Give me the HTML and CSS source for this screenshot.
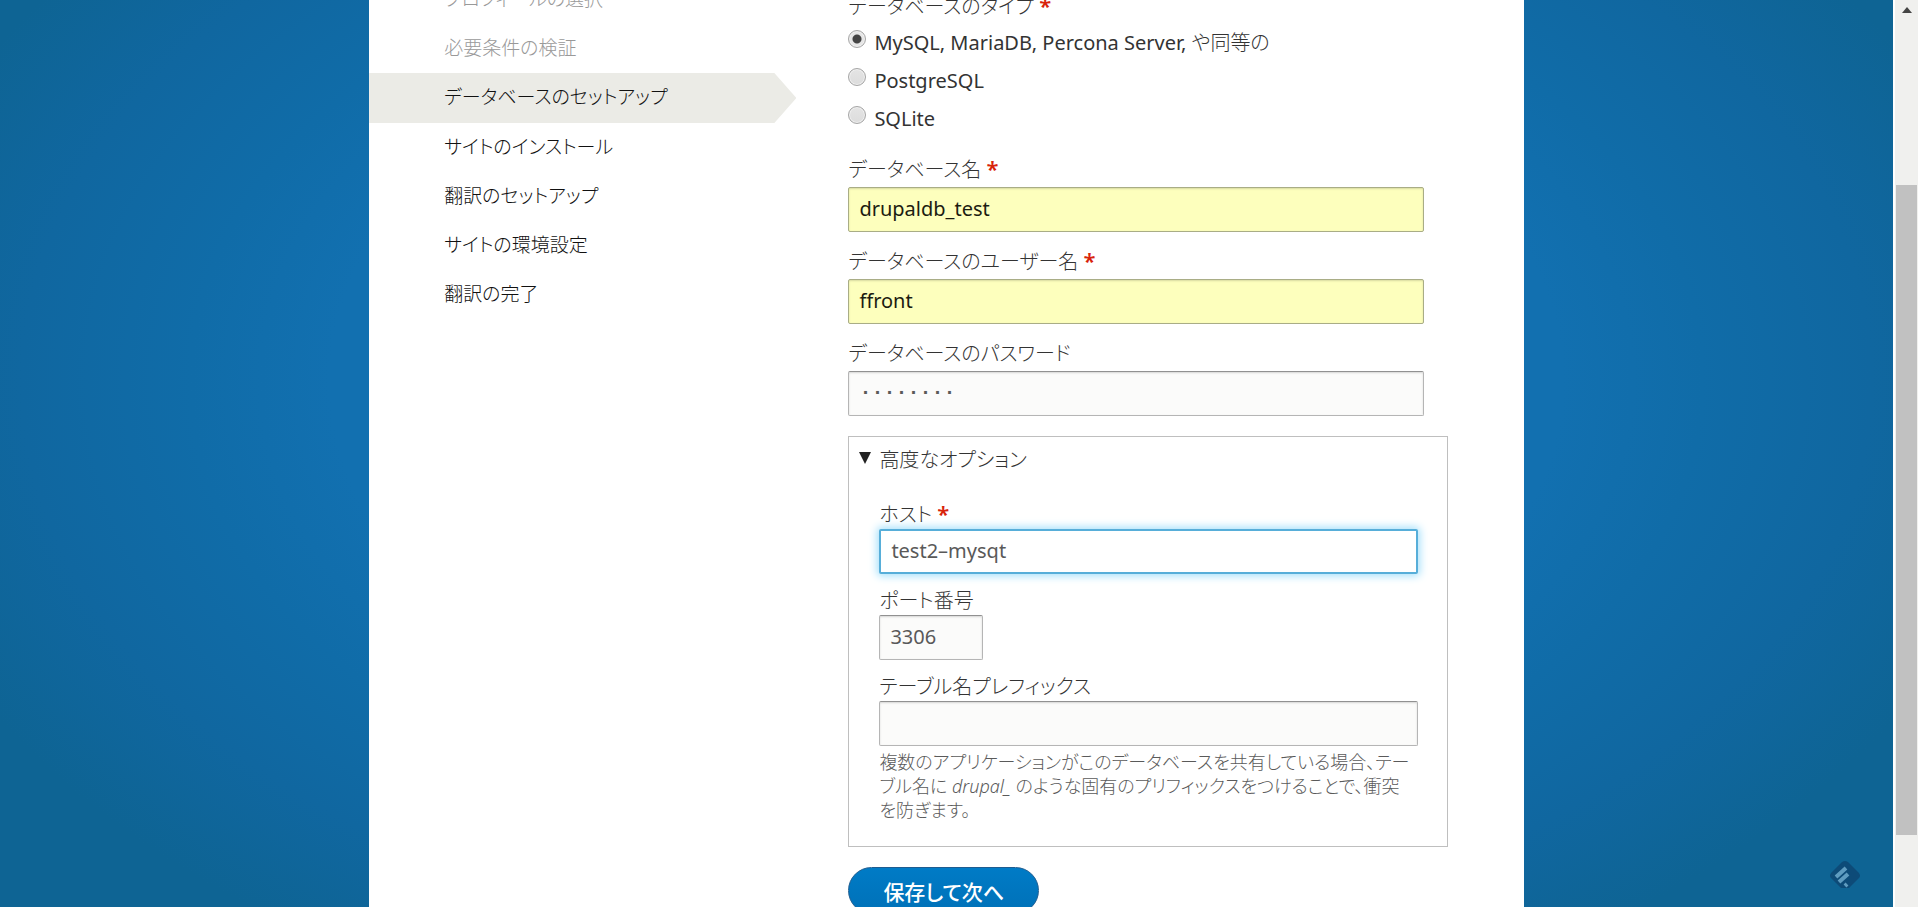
FILE: index.html
```
<!DOCTYPE html>
<html lang="ja">
<head>
<meta charset="utf-8">
<title>データベースのセットアップ</title>
<link rel="stylesheet" href="styles.css">
</head>
<body>
<div class="backdrop">
  <div class="page">
    <nav class="steps" aria-label="インストールの手順">
      <ol class="step-list">
        <li class="step done">プロフィールの選択</li>
        <li class="step done">必要条件の検証</li>
        <li class="step active">データベースのセットアップ</li>
        <li class="step">サイトのインストール</li>
        <li class="step">翻訳のセットアップ</li>
        <li class="step">サイトの環境設定</li>
        <li class="step">翻訳の完了</li>
      </ol>
    </nav>
    <main class="content">
      <form>
        <fieldset class="driver">
          <legend class="label">データベースのタイプ <span class="required">*</span></legend>
          <div class="option"><input type="radio" name="driver" id="mysql" checked><label for="mysql">MySQL, MariaDB, Percona Server, <span class="light">や同等の</span></label></div>
          <div class="option"><input type="radio" name="driver" id="pgsql"><label for="pgsql">PostgreSQL</label></div>
          <div class="option"><input type="radio" name="driver" id="sqlite"><label for="sqlite">SQLite</label></div>
        </fieldset>
        <div class="field">
          <label class="label" for="db-name">データベース名 <span class="required">*</span></label>
          <input class="text filled" type="text" id="db-name" value="drupaldb_test">
        </div>
        <div class="field">
          <label class="label" for="db-user">データベースのユーザー名 <span class="required">*</span></label>
          <input class="text filled" type="text" id="db-user" value="ffront">
        </div>
        <div class="field">
          <label class="label" for="db-pass">データベースのパスワード</label>
          <input class="text password" type="text" id="db-pass" value="········">
        </div>
        <details class="advanced" open>
          <summary class="summary"><svg class="marker" viewBox="0 0 12 12" aria-hidden="true"><path d="M0 0h12L6 12z"/></svg>高度なオプション</summary>
          <div class="advanced-body">
            <div class="subfield">
              <label class="label" for="host">ホスト <span class="required">*</span></label>
              <input class="text focused" type="text" id="host" value="test2–mysqt">
            </div>
            <div class="subfield">
              <label class="label" for="port">ポート番号</label>
              <input class="text port" type="text" id="port" value="3306">
            </div>
            <div class="subfield">
              <label class="label" for="prefix">テーブル名プレフィックス</label>
              <input class="text" type="text" id="prefix" aria-describedby="prefix-help">
            </div>
            <p class="help" id="prefix-help">複数のアプリケーションがこのデータベースを共有している場合、テー<br>ブル名に <em>drupal_</em> のような固有のプリフィックスをつけることで、衝突<br>を防ぎます。</p>
          </div>
        </details>
        <button class="submit" type="button">保存して次へ</button>
      </form>
    </main>
  </div>
  <svg class="badge" viewBox="0 0 32 32" aria-hidden="true">
    <path class="badge-shape" d="M13 2Q16 0 19 2L30 13Q32 16 30 18L20 28H12L2 18Q0 16 2 13Z"/>
    <path class="badge-lines" d="M7 17L17 8M10 22L19 14M16 26L18 24"/>
  </svg>
</div>
<div class="scrollbar" aria-hidden="true">
  <svg class="arrow" viewBox="0 0 10 6"><path d="M0 6L5 0L10 6z"/></svg>
  <div class="thumb"></div>
</div>
</body>
</html>
```
FILE: styles.css
```
* {
  box-sizing: border-box;
}

body {
  margin: 0;
  display: flex;
  height: 100vh;
  overflow: hidden;
  font-family: "Noto Sans", "Noto Sans CJK JP", sans-serif;
  font-size: 20px;
  font-weight: 300;
  font-feature-settings: "palt";
  color: #333;
}

.backdrop {
  position: relative;
  flex: 1;
  display: flex;
  justify-content: center;
  overflow: hidden;
  background: radial-gradient(1400px 875px at 50% 42%, #1270b0 44%, #106ca8 54%, #1067a0 66%, #0e6494 78%);
}

.page {
  display: flex;
  width: 61%;
  min-height: 100%;
  background: #fff;
}

.steps {
  width: 37%;
  flex-shrink: 0;
  font-size: 19px;
}

.step-list {
  list-style: none;
  margin: -25px 0 0;
  padding: 0;
}

.step {
  height: 49px;
  padding-left: 75px;
  line-height: 48px;
  color: #111;
}

.step.done {
  color: #999;
}

.step.active {
  height: 50px;
  background: #ebebe6;
  clip-path: polygon(0 0, calc(100% - 22px) 0, 100% 50%, calc(100% - 22px) 100%, 0 100%);
}

.content {
  width: 600px;
  margin: -9px 0 0 52px;
}

.driver {
  margin: 0 0 16px;
  padding: 0;
  border: 0;
}

.label {
  display: block;
  padding: 0;
  line-height: 32px;
}

.required {
  color: #d8230a;
  font-size: 22px;
  font-weight: 600;
  line-height: 20px;
}

.option {
  display: flex;
  gap: 8px;
  height: 38px;
  line-height: 40px;
  font-weight: 400;
}

.light {
  font-weight: 300;
}

.option input {
  appearance: none;
  width: 18px;
  height: 18px;
  margin: 7px 0 0;
  border: 1px solid #a5a5a5;
  border-radius: 50%;
  background: linear-gradient(#e4e4e4, #dcdcdc);
  box-shadow: inset 0 0 0 1px #f0f0f0;
}

.option input:checked {
  background: radial-gradient(circle, #444 4px, #e6e6e6 5px);
}

.field {
  margin-bottom: 13px;
}

.field .label {
  line-height: 34px;
}

.text {
  display: block;
  width: 100%;
  height: 45px;
  padding: 0 10px 2px;
  border: 1px solid #b5b5b5;
  border-top-color: #919191;
  border-radius: 2px;
  background: #fbfbfa;
  box-shadow: inset 0 1px 2px rgba(0, 0, 0, 0.15);
  font: inherit;
  font-weight: 400;
  color: #595959;
  outline: 0;
}

.field .text {
  width: 576px;
}

.field .filled {
  background: #fdffbd;
  border-color: #a9ad86;
  color: #1c1c10;
}

.password {
  font-family: "Liberation Mono", monospace;
  font-weight: 700;
}

.focused {
  background: #fff;
  border: 2px solid #57aed9;
  box-shadow: 0 0 8px 2px #a5e0fb;
}

.port {
  width: 104px;
}

.advanced {
  margin-top: 20px;
  padding: 0 29px 24px 30px;
  border: 1px solid #bfbfbf;
}

.summary {
  display: flex;
  align-items: center;
  gap: 8px;
  height: 42px;
  margin: 0 -20px 22px;
  list-style: none;
}

.marker {
  width: 12px;
  height: 12px;
  fill: #222;
}

.subfield {
  margin-bottom: 13px;
}

.subfield .label {
  line-height: 28px;
}

.help {
  margin: -9px 0 0;
  font-size: 18px;
  line-height: 24px;
  white-space: nowrap;
  color: #5a5a5a;
}

.submit {
  margin-top: 20px;
  padding: 0 34px;
  height: 47px;
  border: 1px solid #1e5c90;
  border-radius: 24px;
  background: linear-gradient(#007bc6, #0071b8);
  font: inherit;
  font-size: 21px;
  font-weight: 500;
  color: #fff;
}

.badge {
  position: absolute;
  right: 32px;
  bottom: 15px;
  width: 32px;
  height: 32px;
}

.badge-shape {
  fill: #0d4b78;
}

.badge-lines {
  fill: none;
  stroke: #5f9cc0;
  stroke-width: 4;
}

.scrollbar {
  width: 25px;
  padding: 7px 1px 72px 1px;
  border-left: 2px solid #fff;
  background: #f0f0ee;
  display: flex;
  flex-direction: column;
  align-items: center;
}

.arrow {
  width: 10px;
  height: 6px;
  fill: #444;
}

.thumb {
  flex: 1;
  align-self: stretch;
  margin-top: 172px;
  background: #c1c1c1;
}
```
